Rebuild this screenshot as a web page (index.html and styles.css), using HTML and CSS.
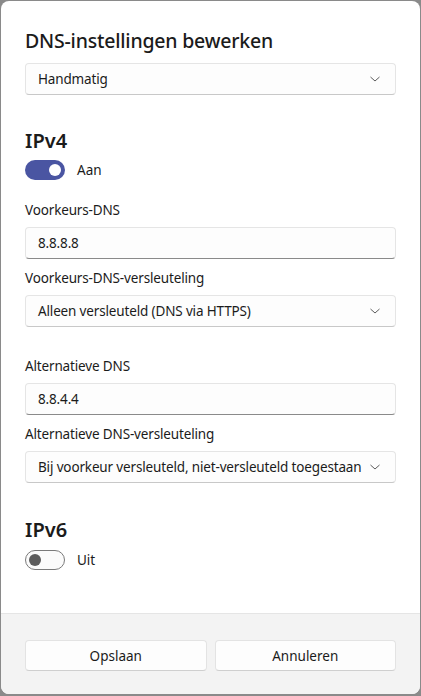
FILE: index.html
```html
<!DOCTYPE html>
<html lang="nl">
<head>
<meta charset="utf-8">
<link rel="stylesheet" href="styles.css">
</head>
<body>
<div class="dialog">
  <div class="content">
    <h1 class="title">DNS-instellingen bewerken</h1>
    <div class="select first">
      <span>Handmatig</span>
      <svg class="chev" width="12" height="8" viewBox="0 0 12 8"><path d="M1.5 2 L6 6 L10.5 2" fill="none" stroke="#5c5c5c" stroke-width="1"/></svg>
    </div>

    <h2 class="section">IPv4</h2>
    <div class="toggle-row">
      <span class="toggle on"><span class="knob"></span></span>
      <span class="toggle-label">Aan</span>
    </div>

    <div class="label">Voorkeurs-DNS</div>
    <div class="input">8.8.8.8</div>
    <div class="label">Voorkeurs-DNS-versleuteling</div>
    <div class="select">
      <span>Alleen versleuteld (DNS via HTTPS)</span>
      <svg class="chev" width="12" height="8" viewBox="0 0 12 8"><path d="M1.5 2 L6 6 L10.5 2" fill="none" stroke="#5c5c5c" stroke-width="1"/></svg>
    </div>

    <div class="label gap">Alternatieve DNS</div>
    <div class="input">8.8.4.4</div>
    <div class="label">Alternatieve DNS-versleuteling</div>
    <div class="select">
      <span>Bij voorkeur versleuteld, niet-versleuteld toegestaan</span>
      <svg class="chev" width="12" height="8" viewBox="0 0 12 8"><path d="M1.5 2 L6 6 L10.5 2" fill="none" stroke="#5c5c5c" stroke-width="1"/></svg>
    </div>

    <h2 class="section v6">IPv6</h2>
    <div class="toggle-row v6">
      <span class="toggle off"><span class="knob"></span></span>
      <span class="toggle-label">Uit</span>
    </div>
  </div>
  <div class="footer">
    <button class="btn">Opslaan</button>
    <button class="btn">Annuleren</button>
  </div>
</div>
</body>
</html>
```
FILE: styles.css
```css
* { box-sizing: border-box; }
html, body { margin: 0; padding: 0; }
body {
  width: 421px;
  height: 696px;
  background: #8a8a8a;
  padding: 1px 1px 2px 1px;
  font-family: "Noto Sans", "Open Sans", sans-serif;
  color: #1b1b1b;
  overflow: hidden;
}
.dialog {
  height: 100%;
  background: #ffffff;
  border-radius: 8px;
  overflow: hidden;
  display: flex;
  flex-direction: column;
}
.content {
  flex: 1;
  padding: 0 24px 0 24px;
  display: flex;
  flex-direction: column;
}
.title {
  margin: 26px 0 0 0;
  font-size: 19.5px;
  font-weight: 500;
  line-height: 28px;
  letter-spacing: -0.2px;
}
.select, .input {
  height: 32px;
  border: 1px solid #e5e5e5;
  border-bottom-color: #c8c8c8;
  border-radius: 4px;
  background: #fdfdfd;
  font-size: 13.5px;
  letter-spacing: -0.15px;
  display: flex;
  align-items: center;
  padding: 0 12px;
  flex-shrink: 0;
  white-space: nowrap;
}
.input { border-bottom: 1px solid #8a8a8a; }
.select { justify-content: space-between; }
.select.first { margin-top: 8px; }
.chev { margin-right: 2px; flex-shrink: 0; }
.section {
  margin: 33px 0 0 0;
  font-size: 20px;
  font-weight: 600;
  line-height: 26px;
}
.section.v6 { margin-top: 34px; }
.toggle-row {
  display: flex;
  align-items: center;
  margin-top: 6px;
  height: 20px;
}
.toggle-row.v6 { margin-top: 7px; }
.toggle {
  width: 40px;
  height: 20px;
  border-radius: 10px;
  display: flex;
  align-items: center;
  padding: 0 4px;
}
.toggle.on { background: #4a55a2; justify-content: flex-end; }
.toggle.on .knob { width: 12px; height: 12px; border-radius: 50%; background: #fff; }
.toggle.off { border: 1px solid #7a7a7a; background: #fbfbfb; padding: 0 3px; }
.toggle.off .knob { width: 12px; height: 12px; border-radius: 50%; background: #5c5c5c; }
.toggle-label { margin-left: 12px; font-size: 13.5px; }
.label {
  font-size: 13.5px;
  letter-spacing: -0.15px;
  line-height: 20px;
  margin-top: 20px;
  margin-bottom: 7px;
}
.label.gap { margin-top: 29px; }
.input + .label { margin-top: 9px; }
.footer {
  height: 81px;
  background: #f3f3f3;
  border-top: 1px solid #e5e5e5;
  display: flex;
  gap: 8px;
  padding: 26px 24px 0 24px;
  flex-shrink: 0;
}
.btn {
  flex: 1;
  height: 31px;
  background: #fdfdfd;
  border: 1px solid #e3e3e3;
  border-bottom-color: #cfcfcf;
  border-radius: 4px;
  font-family: inherit;
  font-size: 13.5px;
  color: #1b1b1b;
}
```
